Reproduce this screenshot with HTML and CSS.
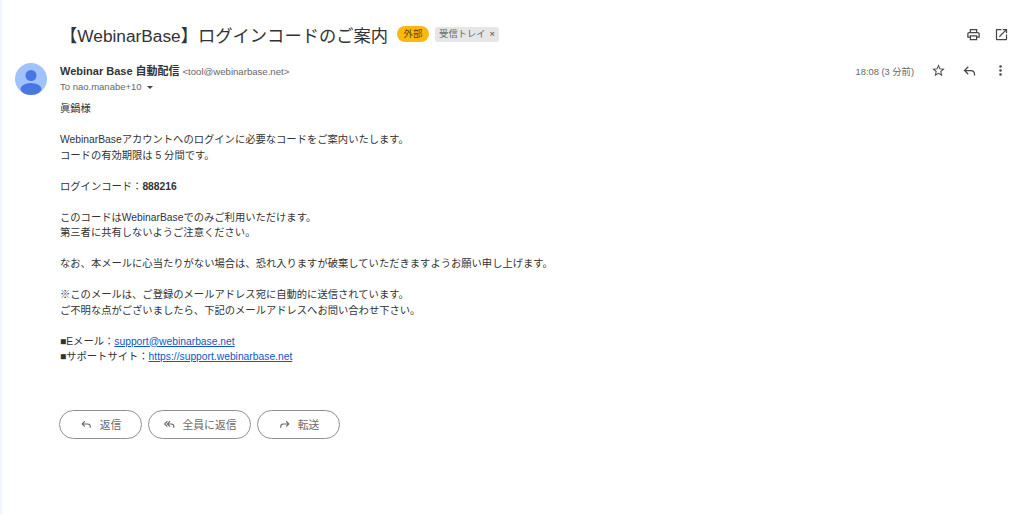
FILE: index.html
```html
<!DOCTYPE html>
<html lang="ja">
<head>
    <meta charset="UTF-8">
    <title>【WebinarBase】ログインコードのご案内</title>
    <link rel="stylesheet" href="styles.css">
</head>
<body>
    <div class="mail">
        <div class="subject">
            <h1>【WebinarBase】ログインコードのご案内</h1>
            <span class="tag-ext">外部</span>
            <span class="tag-inbox">受信トレイ<i>×</i></span>
            <div class="subject-icons">
                <svg class="icon" viewBox="0 0 24 24"><path d="M19 8h-1V3H6v5H5c-1.700 0-3 1.300-3 3v6h4v4h12v-4h4v-6c0-1.700-1.300-3-3-3zM8 5h8v3H8V5zm8 14H8v-4h8v4zm2-4v-2H6v2H4v-4c0-.6.4-1 1-1h14c.6 0 1 .4 1 1v4h-2z"/></svg>
                <svg class="icon" viewBox="0 0 24 24"><path d="M19 19H5V5h7V3H5c-1.100 0-2 .9-2 2v14c0 1.100.9 2 2 2h14c1.100 0 2-.9 2-2v-7h-2v7zM14 3v2h3.600l-9.800 9.800 1.400 1.400L19 6.400V10h2V3h-7z"/></svg>
            </div>
        </div>
        <div class="sender">
            <svg class="avatar" viewBox="0 0 32 32">
                <circle cx="16" cy="16" r="16" fill="#a0c3ff"/>
                <circle cx="16" cy="12.500" r="5.500" fill="#4876e2"/>
                <ellipse cx="16" cy="26" rx="10.500" ry="6" fill="#4876e2"/>
            </svg>
            <div class="sender-info">
                <div><b>Webinar Base 自動配信</b> <span class="addr">&lt;tool@webinarbase.net&gt;</span></div>
                <div class="to">To nao.manabe+10 <span class="caret"></span></div>
            </div>
            <div class="sender-right">
                <span class="time">18:08 (3 分前)</span>
                <svg class="icon" viewBox="0 0 24 24"><path d="M22 9.240l-7.190-.62L12 2 9.190 8.630 2 9.240l5.460 4.730L5.820 21 12 17.270 18.180 21l-1.630-7.030L22 9.240zM12 15.400l-3.760 2.270 1-4.280-3.320-2.880 4.380-.38L12 6.100l1.710 4.040 4.380.38-3.320 2.880 1 4.280L12 15.400z"/></svg>
                <svg class="icon" viewBox="0 0 24 24"><path class="outline" d="M10 6 4 12l6 6M4 12h10c3.500 0 6 2.500 6 6v2"/></svg>
                <svg class="icon" viewBox="0 0 24 24"><circle cx="12" cy="5.500" r="2"/><circle cx="12" cy="12" r="2"/><circle cx="12" cy="18.500" r="2"/></svg>
            </div>
        </div>
        <div class="body">
            <p>眞鍋様</p>
            <p>WebinarBaseアカウントへのログインに必要なコードをご案内いたします。<br>コードの有効期限は 5 分間です。</p>
            <p>ログインコード：<b>888216</b></p>
            <p>このコードはWebinarBaseでのみご利用いただけます。<br>第三者に共有しないようご注意ください。</p>
            <p>なお、本メールに心当たりがない場合は、恐れ入りますが破棄していただきますようお願い申し上げます。</p>
            <p>※このメールは、ご登録のメールアドレス宛に自動的に送信されています。<br>ご不明な点がございましたら、下記のメールアドレスへお問い合わせ下さい。</p>
            <p>■Eメール：<a href="#">support@webinarbase.net</a><br>■サポートサイト：<a href="#">https://support.webinarbase.net</a></p>
        </div>
        <div class="actions">
            <a class="btn" href="#"><svg viewBox="0 0 24 24"><path d="M9 6 4 11l5 5M4 11h10c3 0 5 2 5 5v2"/></svg>返信</a>
            <a class="btn btn-wide" href="#"><svg viewBox="0 0 24 24"><path d="M8 6 3 11l5 5M13 6l-5 5 5 5M8 11h7c3 0 5 2 5 5v2"/></svg>全員に返信</a>
            <a class="btn" href="#"><svg viewBox="0 0 24 24"><path d="M15 6l5 5-5 5M20 11H10c-3 0-5 2-5 5v2"/></svg>転送</a>
        </div>
    </div>
</body>
</html>
```

FILE: styles.css
```css
*{
    padding: 0;
    margin: 0;
    box-sizing: border-box;
}
html,body{
    height: 100%;
}
body{
    background: #fff;
    color: #333;
    font-family: "Liberation Sans", "Noto Sans CJK JP", sans-serif;
    font-size: 10.300px;
    overflow: hidden;
}
.mail{
    height: 100%;
    border-left: 2px solid #f1f6fd;
    padding: 19px 14px 0 13px;
}
.subject{
    display: flex;
    align-items: center;
    height: 30px;
    padding-left: 45px;
}
.subject h1{
    font-size: 17.300px;
    font-weight: 400;
    color: #333;
    white-space: nowrap;
}
.tag-ext{
    margin-left: 9px;
    width: 32px;
    height: 16px;
    line-height: 16px;
    border-radius: 8px;
    background: #fbb90f;
    color: #5f4300;
    text-align: center;
    font-size: 9.500px;
}
.tag-inbox{
    margin-left: 6px;
    width: 64px;
    height: 15px;
    line-height: 15px;
    padding-left: 4px;
    border-radius: 3px;
    background: #e6e6e6;
    color: #666;
    font-size: 9.300px;
}
.tag-inbox i{
    font-style: normal;
    margin-left: 4px;
    color: #444;
}
.subject-icons{
    margin-left: auto;
    display: flex;
    gap: 13px;
    padding-right: 1px;
}
.icon{
    width: 15px;
    height: 15px;
    fill: #444746;
    display: block;
}
.sender{
    display: flex;
    margin-top: 14px;
}
.avatar{
    width: 32px;
    height: 32px;
    flex: none;
}
.sender-info{
    margin-left: 13px;
    padding-top: 1px;
    line-height: 15px;
}
.sender-info b{
    color: #333;
    font-weight: 700;
    font-size: 11px;
}
.addr{
    color: #666;
    font-size: 9.600px;
}
.to{
    color: #666;
    font-size: 9.500px;
}
.caret{
    display: inline-block;
    margin-left: 3px;
    vertical-align: 1px;
    border-left: 3px solid transparent;
    border-right: 3px solid transparent;
    border-top: 3px solid #444;
}
.sender-right{
    margin-left: auto;
    display: flex;
    gap: 16px;
    height: 15px;
    align-items: center;
    padding-right: 2px;
}
.time{
    color: #666;
    font-size: 9.300px;
    margin-right: 1px;
}
.outline{
    fill: none;
    stroke: #444746;
    stroke-width: 2;
}
.body{
    padding: 6px 0 0 45px;
    line-height: 15.500px;
}
.body p{
    margin-bottom: 15.500px;
}
.body a{
    color: #1155cc;
}
.actions{
    display: flex;
    gap: 6px;
    margin: 45px 0 0 44px;
}
.btn{
    display: flex;
    align-items: center;
    justify-content: center;
    gap: 7px;
    width: 83px;
    height: 29px;
    border: 1px solid #8f8f8f;
    border-radius: 15px;
    color: #6a6a6a;
    font-size: 10.800px;
    text-decoration: none;
}
.btn-wide{
    width: 103px;
}
.btn svg{
    width: 13px;
    height: 13px;
    fill: none;
    stroke: #666;
    stroke-width: 2;
}
```
